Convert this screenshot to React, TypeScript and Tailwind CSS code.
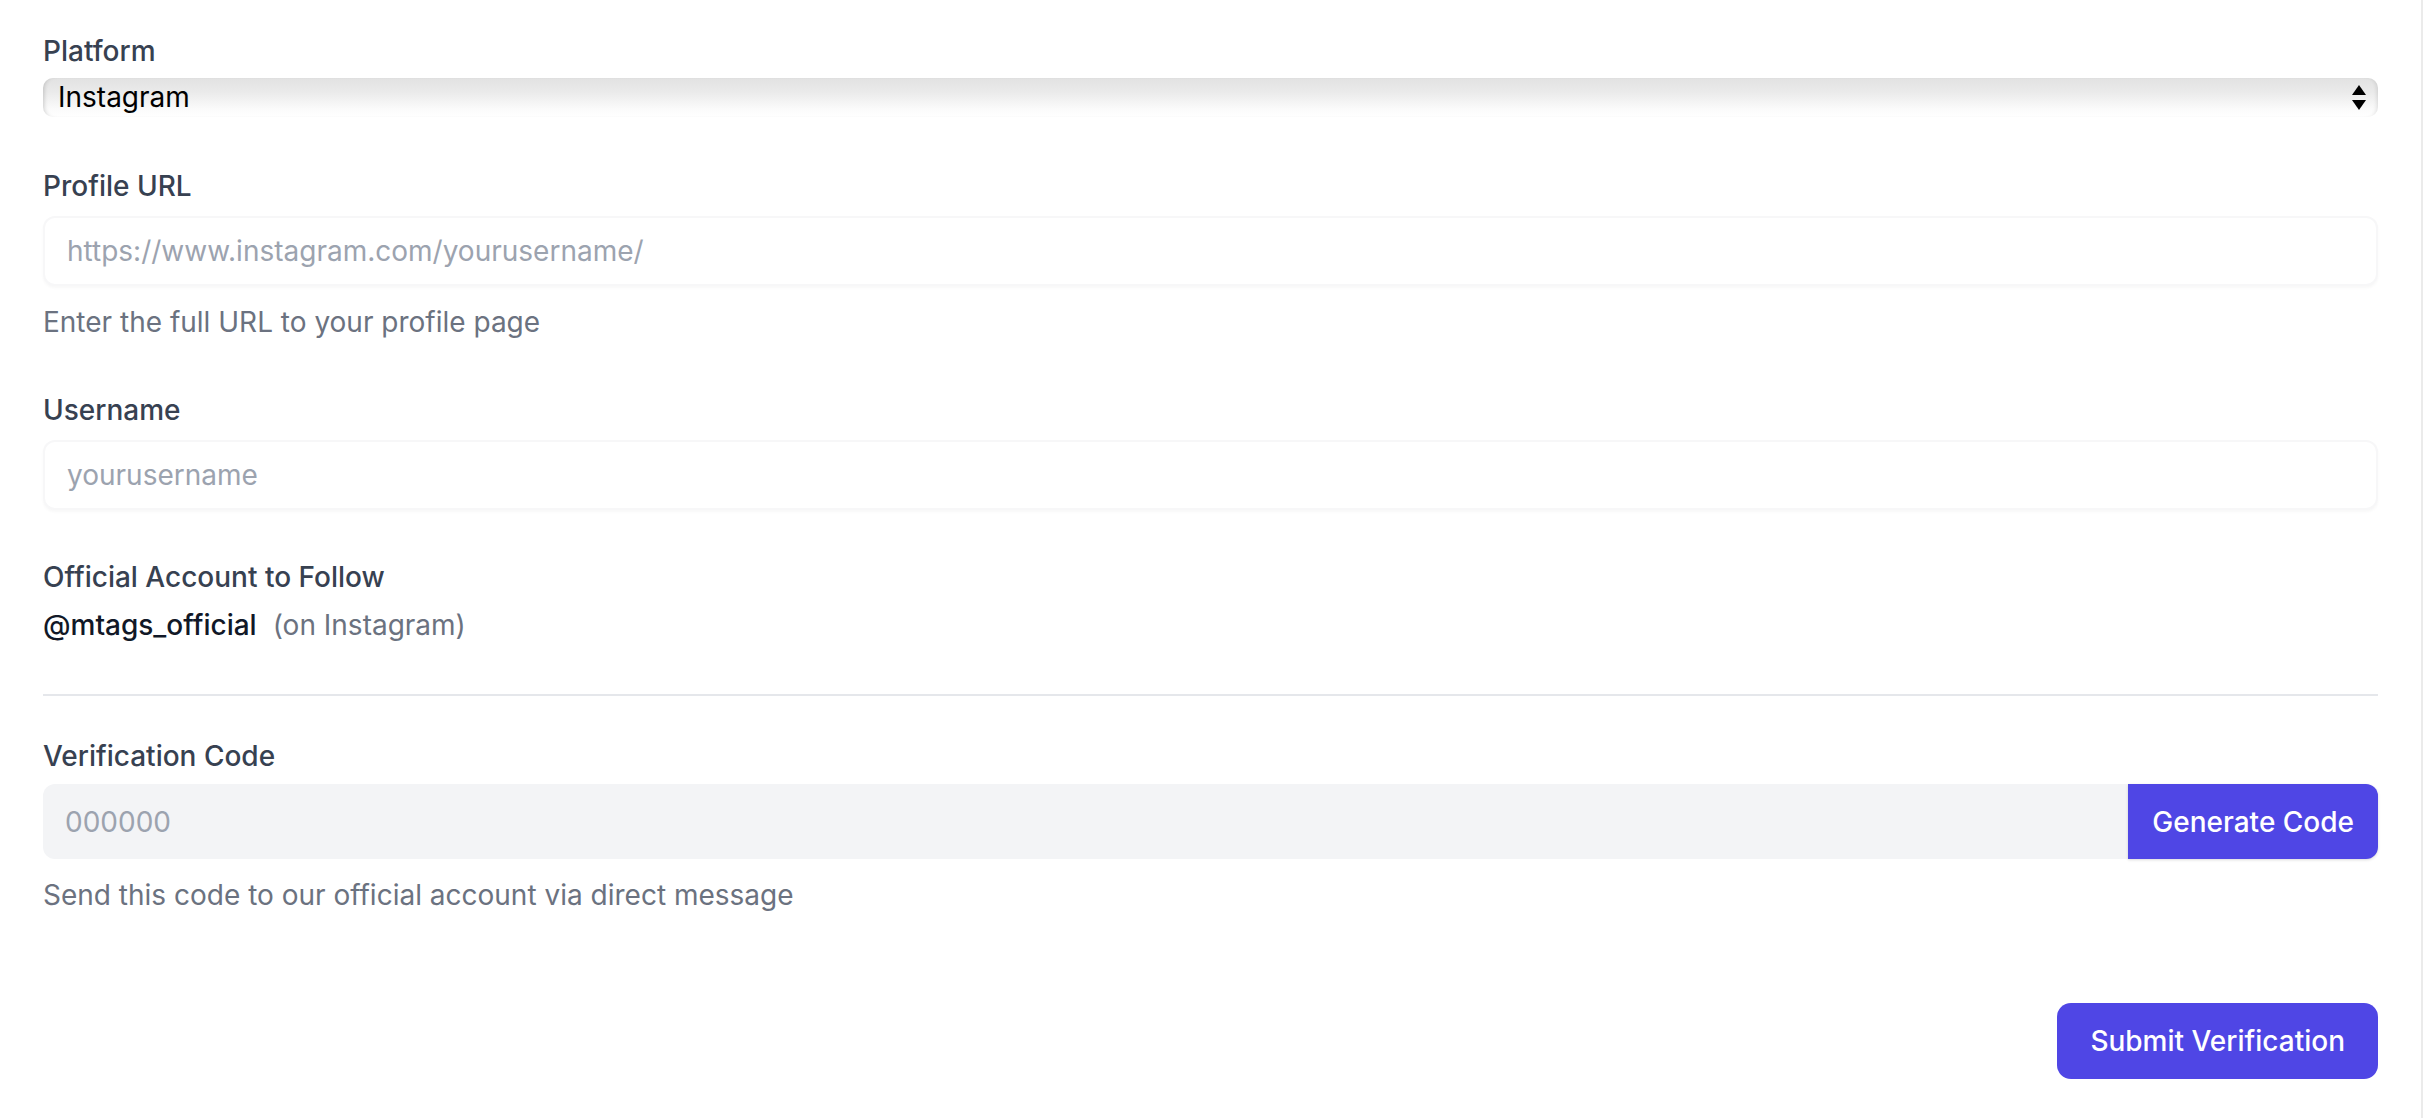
import React from "react";

const label = "block text-[28px] leading-[40px] font-medium text-[#374151]";
const input =
  "block w-full h-[70px] rounded-[12px] border-2 border-[#f7f7f8] bg-white px-[22px] text-[28px] text-[#111827] shadow-[0_2px_3px_rgba(0,0,0,0.03)] outline-none placeholder:text-[#9ca3af]";
const help = "mt-[16px] text-[28px] leading-[40px] text-[#6b7280]";

function SelectArrows() {
  return (
    <svg width="14" height="26" viewBox="0 0 14 26" className="shrink-0">
      <path d="M7 0 L14 10 L0 10 Z" fill="#000" />
      <path d="M0 15 L14 15 L7 25 Z" fill="#000" />
    </svg>
  );
}

export default function App() {
  return (
    <div className="min-h-screen bg-white font-['Inter','Liberation_Sans',sans-serif]">
      <div className="w-[2423px] min-h-[1118px] border-r-2 border-[#ebebeb] px-[43px] pt-[31px] pb-[39px]">
        {/* platform */}
        <div>
          <label className={label}>Platform</label>
          <div className="mt-[7px] flex h-[39px] items-center justify-between rounded-[10px] bg-[linear-gradient(to_bottom,#e2e2e2_0%,#eaeaea_35%,#fbfbfb_80%,#ffffff_100%)] pl-[15px] pr-[12px] shadow-[inset_4px_0_4px_-3px_rgba(0,0,0,0.18),inset_-4px_0_4px_-3px_rgba(0,0,0,0.12)]">
            <span className="text-[28px] leading-[39px] text-black">Instagram</span>
            <SelectArrows />
          </div>
        </div>

        {/* profile url */}
        <div className="mt-[49px]">
          <label className={label}>Profile URL</label>
          <input
            className={`mt-[10px] ${input}`}
            placeholder="https://www.instagram.com/yourusername/"
          />
          <p className={help}>Enter the full URL to your profile page</p>
        </div>

        <div className="mt-[48px]">
          <label className={label}>Username</label>
          <input className={`mt-[10px] ${input}`} placeholder="yourusername" />
        </div>

        <div className="mt-[47px]">
          <label className={label}>Official Account to Follow</label>
          <div className="mt-[8px] text-[28px] leading-[40px]">
            <span className="font-medium text-[#111827]">@mtags_official</span>
            <span className="ml-[16px] text-[#6b7280]">(on Instagram)</span>
          </div>
        </div>

        {/* verification */}
        <div className="mt-[49px] border-t-2 border-[#e5e7eb] pt-[40px]">
          <label className={label}>Verification Code</label>
          <div className="mt-[8px] flex h-[75px]">
            <input
              className="h-full min-w-0 flex-1 rounded-l-[12px] bg-[#f3f4f6] px-[22px] text-[28px] text-[#111827] outline-none placeholder:text-[#9ca3af]"
              placeholder="000000"
              readOnly
            />
            <button className="h-full rounded-r-[12px] bg-[#4f46e5] px-[24px] text-[28px] font-medium text-white shadow-[0_1px_3px_rgba(0,0,0,0.15)]">
              Generate Code
            </button>
          </div>
          <p className={help}>Send this code to our official account via direct message</p>
        </div>

        <div className="mt-[88px] flex justify-end">
          <button className="h-[76px] rounded-[14px] bg-[#4f46e5] px-[33px] text-[28px] font-medium text-white">
            Submit Verification
          </button>
        </div>
      </div>
    </div>
  );
}
